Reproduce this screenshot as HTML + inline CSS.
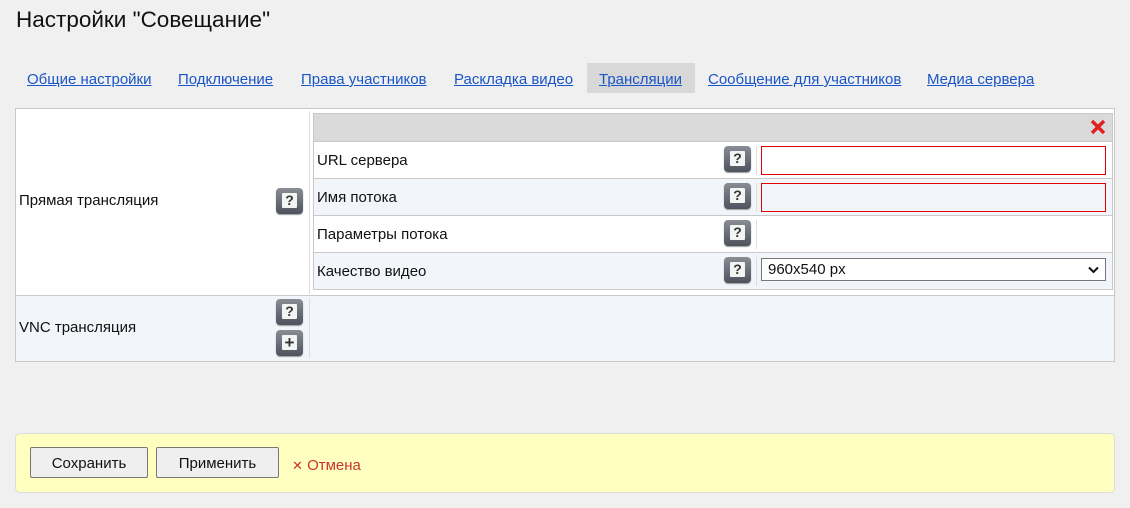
<!DOCTYPE html>
<html><head><meta charset="utf-8"><style>
*{margin:0;padding:0;box-sizing:border-box}
body{width:1130px;height:508px;background:#f0f0f0;font-family:"Liberation Sans","DejaVu Sans",sans-serif;font-size:15px;color:#111;position:relative;overflow:hidden}
.a{position:absolute}
h1{position:absolute;left:16px;top:7px;font-size:22.5px;font-weight:normal;color:#111}
.tab{position:absolute;top:65px;height:30px;line-height:30px;color:#1a55c8;text-decoration:underline;font-size:15px}
.help{position:absolute;width:27px;height:26px;border-radius:4px;background:linear-gradient(#8a8d96,#4e525c);box-shadow:0 1px 1px #999}
.help::before{content:"";position:absolute;left:6px;top:5px;width:15px;height:15px;background:#f4f4f4;border-radius:1px}
.help span{position:absolute;left:6px;top:5px;width:15px;text-align:center;font-weight:bold;font-size:14px;color:#333;line-height:15px}
.row{position:absolute;left:314px;width:798px;height:37px;border-top:1px solid #c8c8c8}
.row .l{position:absolute;left:3px;top:1px;line-height:36px}
.row .d{position:absolute;left:442px;top:4px;height:29px;border-left:1px solid #ddd}
.inp{position:absolute;left:447px;top:4px;width:345px;height:29px;border:1px solid #e00000}
.btn{position:absolute;top:447px;height:31px;border:1px solid #777;border-radius:2px;background:#efefef;line-height:31px;text-align:center;font-size:15px}
</style></head><body>
<h1>Настройки "Совещание"</h1>
<div class="a" style="left:587px;top:63px;width:108px;height:30px;background:#d8d8d8"></div>
<div class="tab" style="left:27px">Общие настройки</div>
<div class="tab" style="left:178px">Подключение</div>
<div class="tab" style="left:301px">Права участников</div>
<div class="tab" style="left:454px">Раскладка видео</div>
<div class="tab" style="left:599px">Трансляции</div>
<div class="tab" style="left:708px">Сообщение для участников</div>
<div class="tab" style="left:927px">Медиа сервера</div>

<div class="a" style="left:15px;top:108px;width:1100px;height:254px;border:1px solid #c8c8c8;background:#fff"></div>
<div class="a" style="left:16px;top:295px;width:1098px;height:66px;background:#f2f5fa;border-top:1px solid #c8c8c8"></div>
<div class="a" style="left:309px;top:111px;height:183px;border-left:1px solid #ddd"></div>
<div class="a" style="left:309px;top:298px;height:60px;border-left:1px solid #ddd"></div>
<div class="a" style="left:19px;top:192px">Прямая трансляция</div>
<div class="help" style="left:276px;top:188px"><span>?</span></div>
<div class="a" style="left:19px;top:319px">VNC трансляция</div>
<div class="help" style="left:276px;top:299px"><span>?</span></div>
<div class="help" style="left:276px;top:330px"><span style="font-size:17px;line-height:15px">+</span></div>

<div class="a" style="left:313px;top:113px;width:800px;height:177px;border:1px solid #c8c8c8;background:#fff"></div>
<div class="a" style="left:314px;top:114px;width:798px;height:27px;background:#dadada"></div>
<svg class="a" style="left:1090px;top:119px" width="16" height="16" viewBox="0 0 16 16"><path d="M2 2L14 14M14 2L2 14" stroke="#e02020" stroke-width="3.5"/></svg>
<div class="row" style="top:141px;background:#fff"><div class="l">URL сервера</div><div class="help" style="left:410px;top:4px"><span>?</span></div><div class="d"></div><div class="inp" style="background:#fff"></div></div>
<div class="row" style="top:178px;background:#f2f5fa"><div class="l">Имя потока</div><div class="help" style="left:410px;top:4px"><span>?</span></div><div class="d"></div><div class="inp"></div></div>
<div class="row" style="top:215px;background:#fff"><div class="l">Параметры потока</div><div class="help" style="left:410px;top:4px"><span>?</span></div><div class="d"></div></div>
<div class="row" style="top:252px;background:#f2f5fa;height:37px"><div class="l">Качество видео</div><div class="help" style="left:410px;top:4px"><span>?</span></div><div class="d"></div>
<div class="inp" style="top:5px;height:23px;border-color:#777;background:#fff;padding-left:6px;line-height:22px">960x540 px<svg style="position:absolute;right:6px;top:7px" width="11" height="8" viewBox="0 0 11 8"><path d="M1 1.5L5.5 6L10 1.5" fill="none" stroke="#111" stroke-width="2"/></svg></div></div>

<div class="a" style="left:15px;top:433px;width:1100px;height:60px;background:#ffffc0;border:1px solid #ddd;border-radius:5px"></div>
<div class="btn" style="left:30px;width:118px">Сохранить</div>
<div class="btn" style="left:156px;width:123px">Применить</div>
<div class="a" style="left:292px;top:457px;color:#cc3333;font-size:15px"><b style="font-size:13px">✕</b> Отмена</div>
</body></html>
